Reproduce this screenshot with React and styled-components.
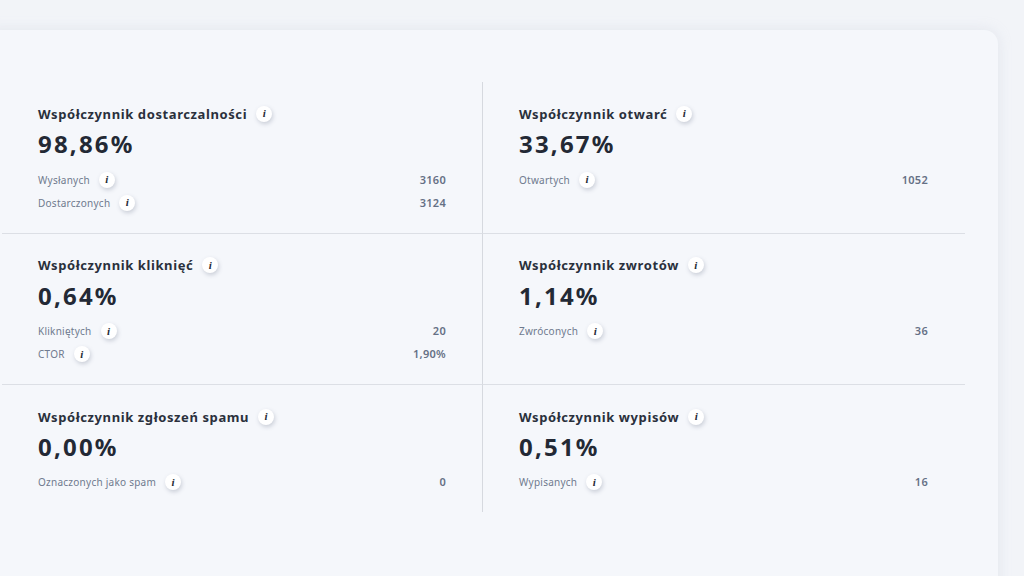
import React from 'react';
import styled, { createGlobalStyle } from 'styled-components';

const metrics = [
  { title: 'Współczynnik dostarczalności', value: '98,86%', rows: [['Wysłanych', '3160'], ['Dostarczonych', '3124']] },
  { title: 'Współczynnik otwarć', value: '33,67%', rows: [['Otwartych', '1052']] },
  { title: 'Współczynnik kliknięć', value: '0,64%', rows: [['Klikniętych', '20'], ['CTOR', '1,90%']] },
  { title: 'Współczynnik zwrotów', value: '1,14%', rows: [['Zwróconych', '36']] },
  { title: 'Współczynnik zgłoszeń spamu', value: '0,00%', rows: [['Oznaczonych jako spam', '0']] },
  { title: 'Współczynnik wypisów', value: '0,51%', rows: [['Wypisanych', '16']] },
];

const App = () => (
  <Page>
    <GlobalStyle />
    <Card>
      <Grid>
        {metrics.map(({ title, value, rows }, index) => (
          <Cell key={title} $right={index % 2 === 1} $last={index >= 4}>
            <TitleRow>
              <Title>{title}</Title>
              <Info>i</Info>
            </TitleRow>
            <Value>{value}</Value>
            <Rows>
              {rows.map(([label, amount]) => (
                <Row key={label}>
                  <Label>{label}</Label>
                  <Info>i</Info>
                  <Amount>{amount}</Amount>
                </Row>
              ))}
            </Rows>
          </Cell>
        ))}
      </Grid>
    </Card>
  </Page>
);

const GlobalStyle = createGlobalStyle`
  html, body {
    margin: 0;
    height: 100%;
    overflow: hidden;
    background: #f2f4f8;
  }
  body {
    font-family: "Noto Sans", "Open Sans", sans-serif;
  }
`;
const Page = styled.div`
  height: 576px;
  padding: 30px 26px 0 0;
  box-sizing: border-box;
  overflow: hidden;
`;
const Card = styled.div`
  margin-left: -20px;
  height: 600px;
  padding: 52px 33px 0 22px;
  box-sizing: border-box;
  background: #f5f7fb;
  border-radius: 14px;
  box-shadow: 0 0 14px rgba(180, 190, 210, 0.26);
`;
const Grid = styled.div`
  display: grid;
  grid-template-columns: 481px 482px;
  grid-template-rows: 151.6px 151.2px 127.2px;
`;
const Cell = styled.div`
  box-sizing: border-box;
  padding: 23.8px ${p => (p.$right ? '37px' : '36px')} 0 36px;
  border-bottom: ${p => (p.$last ? '0' : '1px solid #dcdfe5')};
  border-right: ${p => (p.$right ? '0' : '1px solid #d6d9df')};
`;
const TitleRow = styled.div`
  display: flex;
  align-items: center;
  height: 16px;
`;
const Title = styled.div`
  font-size: 13px;
  line-height: 16px;
  font-weight: 700;
  letter-spacing: 0.6px;
  color: #2a303c;
`;
const Info = styled.span`
  flex: none;
  width: 16px;
  height: 16px;
  margin-left: 9px;
  border-radius: 50%;
  background: #fff;
  box-shadow: 1px 2px 4px rgba(90, 100, 125, 0.28);
  display: flex;
  align-items: center;
  justify-content: center;
  font-family: "Liberation Serif", serif;
  font-size: 11px;
  font-weight: 700;
  font-style: italic;
  line-height: 1;
  color: #262b36;
`;
const Value = styled.div`
  margin-top: 5.4px;
  font-size: 24px;
  line-height: 34px;
  font-weight: 700;
  letter-spacing: 2.2px;
  color: #232935;
`;
const Rows = styled.div`
  margin-top: 10.4px;
  display: flex;
  flex-direction: column;
  gap: 7px;
`;
const Row = styled.div`
  display: flex;
  align-items: center;
  height: 16px;
`;
const Label = styled.span`
  font-size: 10px;
  letter-spacing: 0.25px;
  color: #6f7a8e;
`;
const Amount = styled.span`
  margin-left: auto;
  margin-bottom: 1px;
  font-size: 11px;
  font-weight: 600;
  letter-spacing: 0.3px;
  color: #657085;
`;

export default App;
